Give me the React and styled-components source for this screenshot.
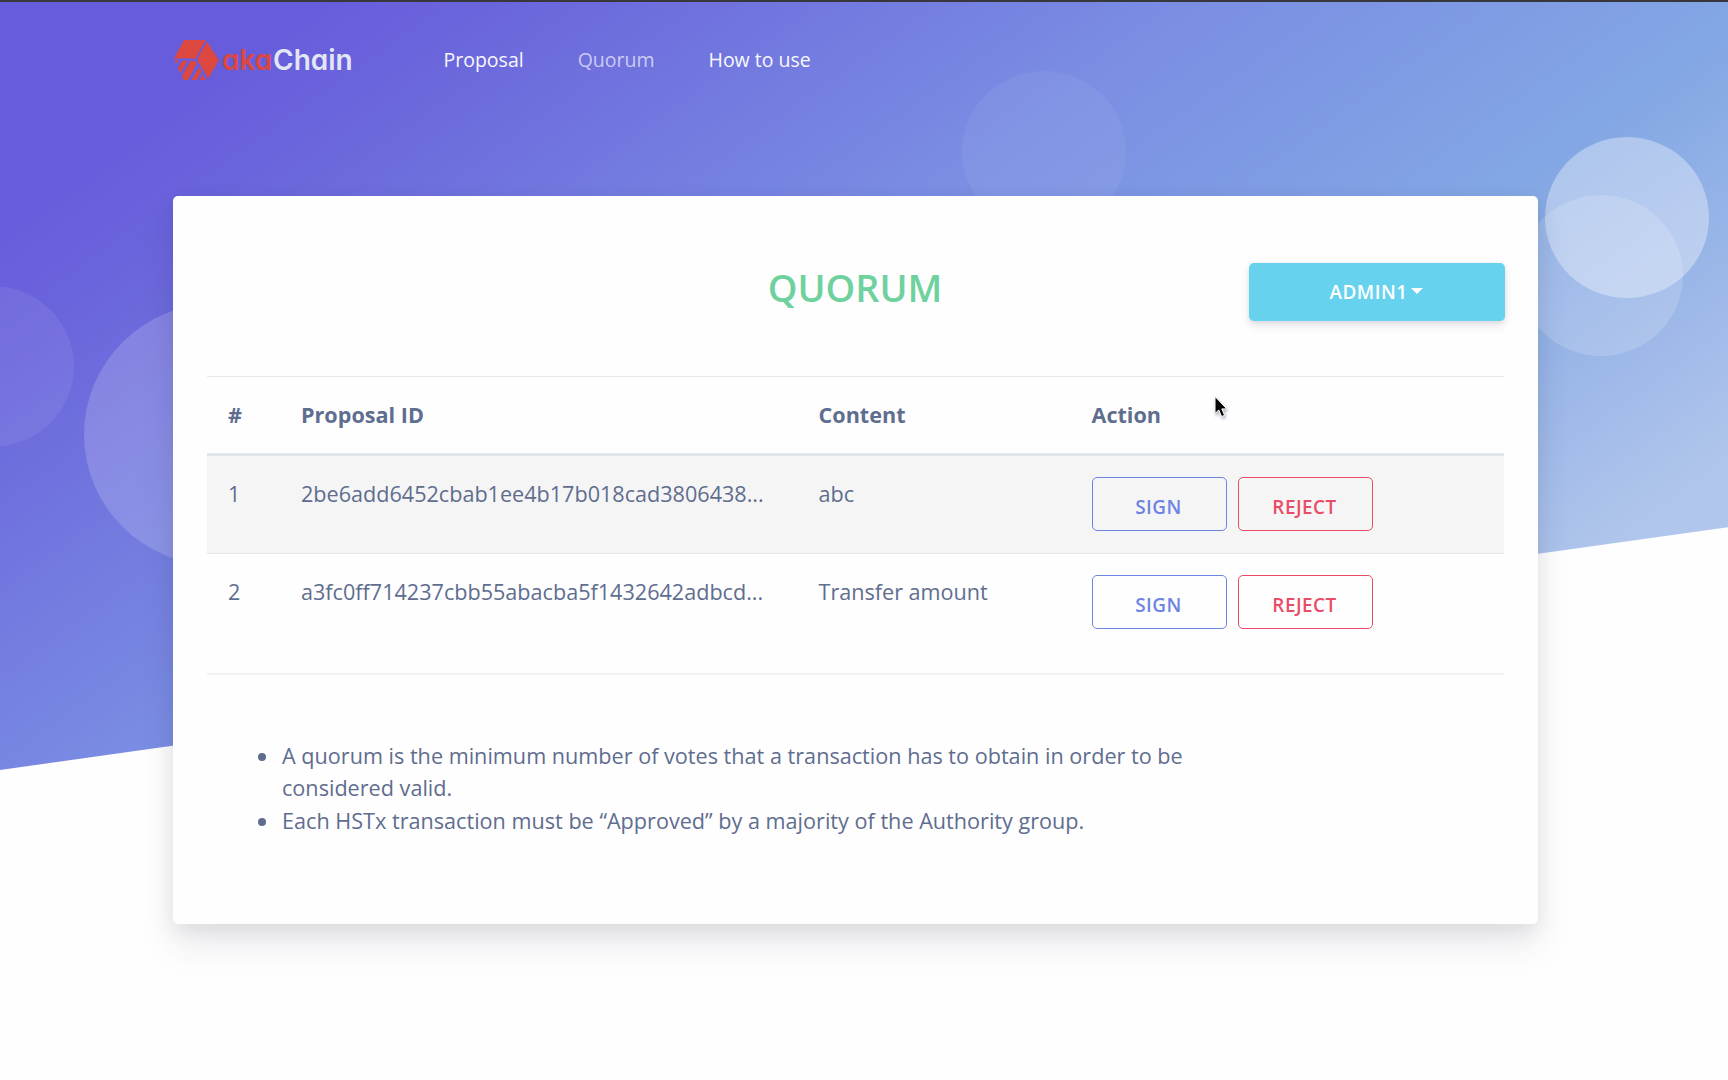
import React from "react";
import styled, { createGlobalStyle } from "styled-components";

const GlobalStyle = createGlobalStyle`
  *, *::before, *::after { box-sizing: border-box; }
  body {
    margin: 0;
    background: #fefefe;
    color: #5f6d8f;
    font-family: "Open Sans", "Noto Sans", sans-serif;
    font-size: 21.6px;
    line-height: 32.4px;
    overflow: hidden;
  }
`;

const Page = styled.div`
  position: relative;
  height: 1080px;
  overflow: hidden;
  border-top: 2px solid #38373c;
`;

const Shape = styled.div`
  position: absolute;
  inset: 0 0 auto 0;
  height: 768px;
  transform: skewY(-8deg);
  transform-origin: 0 0;
  background: linear-gradient(150deg, #675ddc 13%, #6b66dc 21%, #7a8de3 48%, #83a7e4 72%, #b1c6ec 97%);
`;

const Bubble = styled.span`
  position: absolute;
  left: ${(p) => p.$x}px;
  top: ${(p) => p.$y}px;
  width: ${(p) => p.$size}px;
  height: ${(p) => p.$size * 0.982}px;
  border-radius: 50%;
  background: rgba(255, 255, 255, ${(p) => p.$alpha});
`;

const Navbar = styled.nav`
  position: relative;
  display: flex;
  align-items: center;
  height: 116px;
  padding-left: 174px;
`;

const Brand = styled.a`
  display: flex;
  align-items: center;
  gap: 3px;
  width: 269.5px;
`;

const BrandName = styled.span`
  font: 600 28px/40px Inter, sans-serif;
  font-feature-settings: "cv11";
  letter-spacing: -0.05px;
  color: #e3e6f3;
`;

const BrandAccent = styled.span`
  color: #dc473f;
  margin-right: 1px;
`;

const NavLink = styled.a`
  margin-right: 54px;
  font-size: 19.5px;
  color: ${(p) => (p.$active ? "rgba(255,255,255,.65)" : "#f8f8fe")};
`;

const Card = styled.main`
  position: relative;
  width: 1365px;
  height: 727.5px;
  margin: 78px 0 0 173px;
  padding: 66px 34px 0 34px;
  border-radius: 5px;
  background: #fefefe;
  box-shadow: 0 20px 36px rgba(50, 50, 93, 0.1), 0 7px 20px rgba(0, 0, 0, 0.07);
`;

const CardHeader = styled.header`
  display: grid;
  grid-template-columns: 1fr auto 1fr;
  height: 114px;
`;

const Title = styled.h1`
  grid-column: 2;
  margin: 0 1px 0 0;
  font-size: 37.8px;
  font-weight: 600;
  line-height: 52px;
  color: #6fd19d;
`;

const AdminButton = styled.button`
  justify-self: end;
  display: flex;
  align-items: center;
  justify-content: center;
  gap: 4px;
  width: 256px;
  height: 58px;
  margin: 1px -1px 0 0;
  padding: 0 1px 1px 0;
  border: 0;
  border-radius: 5px;
  background: #67d2ee;
  box-shadow: 0 5px 8px rgba(50, 50, 93, 0.11), 0 1px 4px rgba(0, 0, 0, 0.08);
  font: 600 18.9px/28px "Open Sans", sans-serif;
  letter-spacing: 0.47px;
  color: #fff;
`;

const Caret = styled.span`
  border: 6px solid transparent;
  border-top-color: #fff;
  border-bottom: 0;
  margin-top: -1px;
`;

const Table = styled.table`
  width: 1297px;
  height: 276px;
  table-layout: fixed;
  border-collapse: separate;
  border-spacing: 0;
`;

const Col = styled.col`
  width: ${(p) => p.$width};
`;

const HeadCell = styled.th`
  height: 80px;
  padding: 1px 0 0 21px;
  border-top: 1px solid #e6e9f0;
  border-bottom: 3px solid #e1e5ee;
  text-align: left;
  font-weight: 700;
`;

const Row = styled.tr`
  background: ${(p) => (p.$striped ? "#f5f5f5" : "transparent")};
`;

const Cell = styled.td`
  height: 98px;
  padding: ${(p) => (p.$actions ? 21 : 22)}px 0 0 21px;
  border-bottom: ${(p) => (p.$last ? "0" : "1px solid #e6e8ec")};
  vertical-align: top;
  white-space: nowrap;
`;

const Actions = styled.div`
  display: flex;
  gap: 11px;
`;

const ActionButton = styled.button`
  width: 135px;
  height: 54px;
  padding: 5px 1px 0 0;
  border: 1.4px solid ${(p) => p.$tone};
  border-radius: 5px;
  background: transparent;
  font: 600 18.9px/28px "Open Sans", sans-serif;
  letter-spacing: 0.47px;
  color: ${(p) => p.$tone};
`;

const Divider = styled.hr`
  height: 2px;
  margin: 21px 0 65px;
  border: 0;
  background: #f1f1f6;
`;

const Notes = styled.ul`
  width: 1000px;
  margin: 0;
  padding-left: 75px;
  list-style: none;
`;

const Note = styled.li`
  font-size: 21.63px;
  &::before {
    content: "";
    display: inline-block;
    width: 8px;
    height: 8px;
    margin: 0 16px 3px -24px;
    border-radius: 50%;
    background: #5f6d8f;
  }
`;

const Pointer = styled.svg`
  position: absolute;
  left: 1213px;
  top: 393px;
  filter: drop-shadow(1px 2px 1.5px rgba(60, 50, 100, 0.4));
`;

const BUBBLES = [
  { x: -90, y: 284, size: 164, alpha: 0.07 },
  { x: 84, y: 301, size: 268, alpha: 0.17 },
  { x: 962, y: 69, size: 164, alpha: 0.055 },
  { x: 1519, y: 193, size: 164, alpha: 0.16 },
  { x: 1545, y: 135, size: 164, alpha: 0.35 },
];

const PROPOSALS = [
  { id: "2be6add6452cbab1ee4b17b018cad3806438...", content: "abc" },
  { id: "a3fc0ff714237cbb55abacba5f1432642adbcd...", content: "Transfer amount" },
];

function LogoMark() {
  return (
    <svg width="45" height="42" viewBox="0 0 45 42" fill="#dc473f">
      <path d="M10 1H31.5L21.8 19.5H0Z" />
      <path d="M32.8 2.5L44.8 21L34.3 39.8L23.2 20.5Z" />
      <path d="M0 21H4.5L2.4 25Z" />
      <path d="M8 22H13.5L6.5 34L4 29.5Z" />
      <path d="M16.5 22H21.5L23 24.5L13.8 41H9.5L8 37Z" />
      <path d="M25 28L27.6 32.5L22.8 41H17.5Z" />
      <path d="M29 35.5L32 41H26Z" />
    </svg>
  );
}

export default function App() {
  return (
    <Page>
      <GlobalStyle />
      <Shape />
      {BUBBLES.map((b) => (
        <Bubble key={b.x} $x={b.x} $y={b.y} $size={b.size} $alpha={b.alpha} />
      ))}
      <Navbar>
        <Brand>
          <LogoMark />
          <BrandName>
            <BrandAccent>aka</BrandAccent>Chain
          </BrandName>
        </Brand>
        <NavLink>Proposal</NavLink>
        <NavLink $active>Quorum</NavLink>
        <NavLink>How to use</NavLink>
      </Navbar>
      <Card>
        <CardHeader>
          <Title>QUORUM</Title>
          <AdminButton>
            ADMIN1
            <Caret />
          </AdminButton>
        </CardHeader>
        <Table>
          <colgroup>
            <Col $width="73px" />
            <Col $width="517.5px" />
            <Col $width="273px" />
            <Col $width="auto" />
          </colgroup>
          <thead>
            <tr>
              <HeadCell>#</HeadCell>
              <HeadCell>Proposal ID</HeadCell>
              <HeadCell>Content</HeadCell>
              <HeadCell>Action</HeadCell>
            </tr>
          </thead>
          <tbody>
            {PROPOSALS.map((p, i) => {
              const last = i === PROPOSALS.length - 1;
              return (
                <Row key={p.id} $striped={i % 2 === 0}>
                  <Cell $last={last}>{i + 1}</Cell>
                  <Cell $last={last}>{p.id}</Cell>
                  <Cell $last={last}>{p.content}</Cell>
                  <Cell $last={last} $actions>
                    <Actions>
                      <ActionButton $tone="#6c84e4">SIGN</ActionButton>
                      <ActionButton $tone="#ea4c68">REJECT</ActionButton>
                    </Actions>
                  </Cell>
                </Row>
              );
            })}
          </tbody>
        </Table>
        <Divider />
        <Notes>
          <Note>
            A quorum is the minimum number of votes that a transaction has to obtain in order to be
            considered valid.
          </Note>
          <Note>Each HSTx transaction must be “Approved” by a majority of the Authority group.</Note>
        </Notes>
      </Card>
      <Pointer width="16" height="26" viewBox="0 0 16 26">
        <path
          d="M2 1.5V18.5L5.8 15L8.6 21.6L11.6 20.3L8.8 13.9H13.8Z"
          fill="#050505"
          stroke="#fff"
          strokeWidth="1"
        />
      </Pointer>
    </Page>
  );
}
